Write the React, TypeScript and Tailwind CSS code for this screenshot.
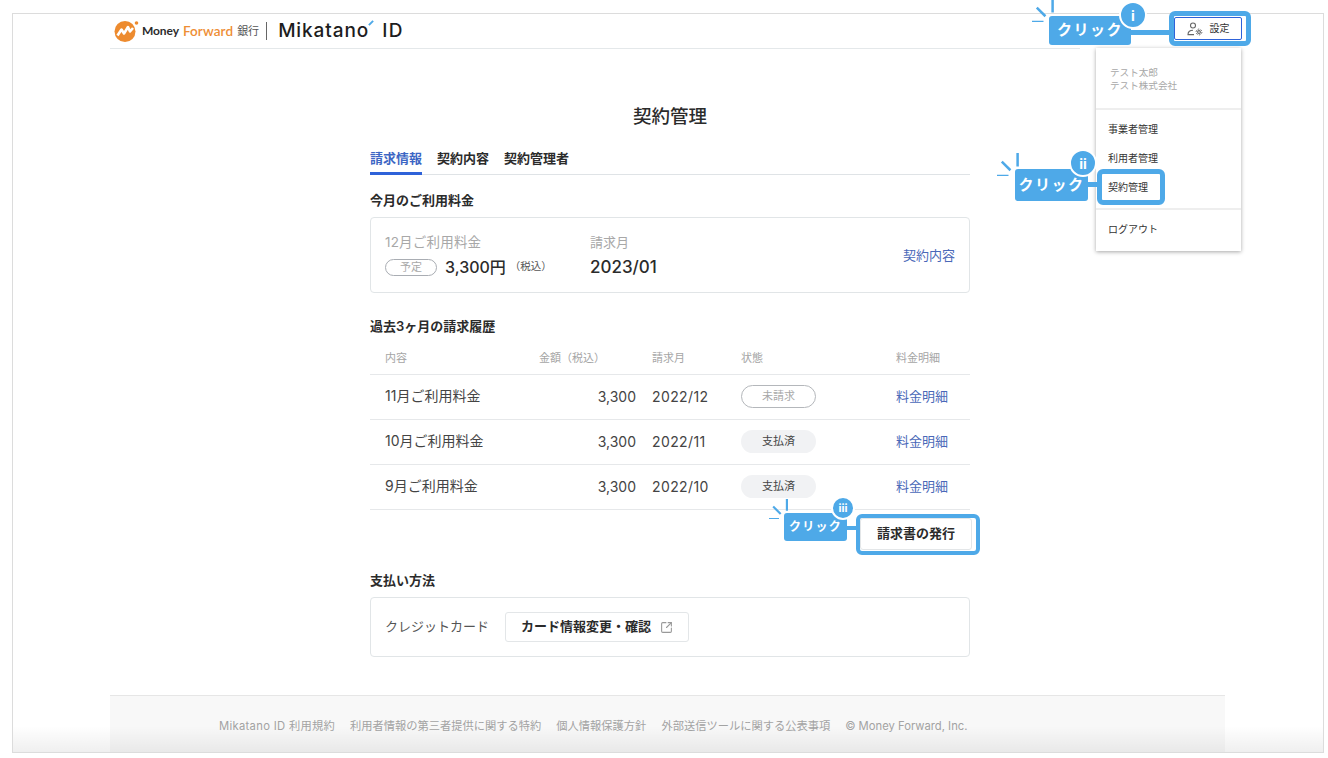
import { SquareArrowOutUpRight } from "lucide-react";

const jp = "font-['Inter','Noto_Sans_CJK_JP',sans-serif]";

const rows = [
  { label: "11月ご利用料金", amount: "3,300", month: "2022/12", status: "未請求", paid: false },
  { label: "10月ご利用料金", amount: "3,300", month: "2022/11", status: "支払済", paid: true },
  { label: "9月ご利用料金", amount: "3,300", month: "2022/10", status: "支払済", paid: true },
];

const footerLinks = [
  "Mikatano ID 利用規約",
  "利用者情報の第三者提供に関する特約",
  "個人情報保護方針",
  "外部送信ツールに関する公表事項",
  "© Money Forward, Inc.",
];

function Logo() {
  return (
    <div className="flex items-center">
      <svg width="25" height="22" viewBox="0 0 25 22" className="mr-[3px]">
        <circle cx="11" cy="11.5" r="10.5" fill="#ed8b2f" />
        <circle cx="22.5" cy="3" r="1.8" fill="#ed8b2f" />
        <path d="M3.5 15.5 L7.5 9.5 L10 13.5 L14 7 L16 11.5 L19 8" fill="none" stroke="#fff" strokeWidth="2.6" strokeLinejoin="round" />
      </svg>
      <span className="text-[12px] font-bold tracking-[-0.1px] text-[#2b2b2b] font-['Lato',sans-serif]">Money</span>
      <span className="ml-[4px] text-[13.5px] font-semibold tracking-[0.1px] text-[#ee8e35] font-['Lato',sans-serif]">Forward</span>
      <span className="ml-[4px] text-[11px] text-[#555]">銀行</span>
      <span className="ml-[7px] mr-[11px] h-[18px] w-px bg-[#666]" />
      <span className="relative text-[19px] font-medium tracking-[0.9px] text-[#1d1d1d] font-['Inter',sans-serif]">
        Mikatano
        <span className="absolute right-[-5px] top-[5px] h-[2px] w-[6px] -rotate-45 bg-[#4ea9e8]" />
      </span>
      <span className="ml-[13px] text-[19px] font-medium tracking-[1.5px] text-[#1d1d1d] font-['Inter',sans-serif]">ID</span>
    </div>
  );
}

function Sparks({ className, size }: { className: string; size: number }) {
  return (
    <svg width={size} height={size} viewBox="0 0 24 24" className={className}>
      <path d="M21.5 0V14 M5 9L14 18 M0 24H12" stroke="#4ea9e8" strokeWidth="2.6" fill="none" />
    </svg>
  );
}

function Badge({ className, label }: { className: string; label: string }) {
  return (
    <div className={`absolute flex items-center justify-center rounded-full border-2 border-white bg-[#4ea9e8] font-bold text-white font-['Inter',sans-serif] ${className}`}>
      {label}
    </div>
  );
}

export default function App() {
  return (
    <div className={`relative h-[758px] w-[1328px] overflow-hidden bg-white pl-[12px] pt-[13px] text-[#2b2b2b] ${jp}`}>
      <div className="relative flex h-[740px] w-[1312px] flex-col border border-[#dcdcdc] bg-white">
        {/* header */}
        <header className="ml-[97px] flex h-[35px] w-[970px] items-center border-b border-[#e4e8ea] pl-[4px]">
          <Logo />
        </header>

        {/* main column */}
        <main className="ml-[357px] w-[600px] flex-1">
          <h1 className="mt-[54px] text-center text-[18.5px] font-medium leading-[26px]">契約管理</h1>

          <div className="mt-[15px] flex h-[31px] gap-[15px] border-b border-[#dfe3e6] text-[13px] font-semibold leading-[28px]">
            <div className="h-[31px] border-b-[3px] border-[#2e62d9] text-[#3c66c4]">請求情報</div>
            <div>契約内容</div>
            <div>契約管理者</div>
          </div>

          <h2 className="mt-[16px] text-[13px] font-semibold leading-[18px]">今月のご利用料金</h2>
          <div className="mt-[8px] flex h-[76px] items-start rounded-[4px] border border-[#e1e5e7] pl-[14px]">
            <div className="w-[205px] pt-[15px]">
              <div className="text-[13.5px] tracking-[0.2px] leading-[18px] text-[#a8a8a8]">12月ご利用料金</div>
              <div className="mt-[5px] flex items-center">
                <span className="flex h-[17px] w-[52px] items-center justify-center rounded-full border-[1.5px] border-[#a9adb3] text-[11px] text-[#a8a8a8]">予定</span>
                <span className="ml-[8px] text-[16px] font-medium leading-[22px]">3,300円</span>
                <span className="ml-[4px] text-[10.5px] text-[#555]">（税込）</span>
              </div>
            </div>
            <div className="pt-[15px]">
              <div className="text-[13px] leading-[18px] text-[#a8a8a8]">請求月</div>
              <div className="mt-[5px] text-[17px] font-medium leading-[22px]">2023/01</div>
            </div>
            <div className="ml-auto pr-[14px] pt-[27px] text-[13px] leading-[20px] text-[#4a68b8]">契約内容</div>
          </div>

          <h2 className="mt-[24px] text-[13px] font-semibold leading-[18px]">過去3ヶ月の請求履歴</h2>
          <div className="mt-[8px]">
            <div className="grid h-[32px] grid-cols-[154px_113px_89px_155px_74px] items-center border-b border-[#e6e8ea] pl-[15px] text-[11px] text-[#a5a5a5]">
              <div>内容</div>
              <div>金額（税込）</div>
              <div>請求月</div>
              <div>状態</div>
              <div>料金明細</div>
            </div>
            {rows.map((r) => (
              <div key={r.month} className="grid h-[45px] grid-cols-[154px_113px_89px_155px_74px] items-center border-b border-[#e6e8ea] pl-[15px] text-[14px] text-[#444]">
                <div className="pb-[4px]">{r.label}</div>
                <div className="pb-[2px] pr-[16px] text-right">{r.amount}</div>
                <div className="pb-[2px] tracking-[0.4px]">{r.month}</div>
                <div className="pb-[2px]">
                  {r.paid ? (
                    <span className="flex h-[23px] w-[75px] items-center justify-center rounded-full bg-[#f1f2f4] text-[11px] text-[#444]">{r.status}</span>
                  ) : (
                    <span className="flex h-[23px] w-[75px] items-center justify-center rounded-full border-[1.5px] border-[#b4b7bb] text-[11px] text-[#a8a8a8]">{r.status}</span>
                  )}
                </div>
                <div className="text-[13px] text-[#4a68b8]">料金明細</div>
              </div>
            ))}
          </div>

          <div className="mt-[8px] flex justify-end">
            <button className="mr-[-2px] flex h-[32px] w-[112px] items-center justify-center rounded-[3px] border border-[#e3e6e8] text-[13px] font-semibold">請求書の発行</button>
          </div>

          <h2 className="mt-[21px] text-[13px] font-semibold leading-[18px]">支払い方法</h2>
          <div className="mt-[8px] flex h-[60px] items-center rounded-[4px] border border-[#e1e5e7] pl-[14px]">
            <span className="w-[120px] text-[13px] text-[#555]">クレジットカード</span>
            <button className="flex h-[30px] w-[184px] items-center justify-center gap-[9px] rounded-[3px] border border-[#e3e6e8] text-[13px] font-semibold">
              カード情報変更・確認
              <SquareArrowOutUpRight size={13} className="text-[#999]" />
            </button>
          </div>
        </main>

        {/* footer */}
        <footer className="ml-[97px] flex h-[57px] w-[1115px] items-center gap-[15px] border-t border-[#e6e6e6] bg-[#f8f8f8] pl-[109px] pt-[4px] text-[11.25px] text-[#a3a3a3]">
          {footerLinks.map((l, i) => (
            <span key={l} className={i === 0 ? "tracking-[0.3px]" : ""}>{l}</span>
          ))}
        </footer>

        {/* bottom fade of the screenshot */}
        <div className="absolute bottom-0 left-0 right-0 h-[26px] bg-gradient-to-b from-transparent to-[#00000010]" />
      </div>

      {/* account dropdown */}
      <div className="absolute left-[1096px] top-[48px] w-[145px] bg-white text-[10px] shadow-[0_1px_4px_rgba(0,0,0,0.35)]">
        <div className="h-[62px] border-b-2 border-[#eeeeee] pl-[14px] pt-[18px] text-[9.6px] leading-[13px] text-[#a8a8a8]">
          <div>テスト太郎</div>
          <div>テスト株式会社</div>
        </div>
        <div className="flex h-[100px] flex-col border-b-2 border-[#eeeeee] pl-[12px] pt-[5px] text-[#333]">
          <div className="h-[29px] leading-[29px]">事業者管理</div>
          <div className="h-[29px] leading-[29px]">利用者管理</div>
          <div className="h-[29px] leading-[29px]">契約管理</div>
        </div>
        <div className="h-[41px] pl-[12px] leading-[39px] text-[#333]">ログアウト</div>
      </div>

      {/* settings button */}
      <button className="absolute left-[1174px] top-[17px] flex h-[23px] w-[68px] items-center justify-center gap-[7px] rounded-[2px] border-[1.5px] border-[#2e62d9] bg-white text-[10px] text-[#333]">
        <svg width="16" height="14" viewBox="0 0 16 14" fill="none" stroke="#666" strokeWidth="1.1">
          <circle cx="6" cy="3.5" r="2.5" />
          <path d="M6 8.2C3 8.2 1 9.6 1 12.6h6" />
          <circle cx="12" cy="10" r="1.4" />
          <circle cx="12" cy="10" r="2.9" strokeWidth="1" strokeDasharray="1.6 1.4" />
        </svg>
        設定
      </button>

      {/* callout i */}
      <Sparks className="absolute left-[1032px] top-[-1px]" size={23} />
      <div className="absolute left-[1049px] top-[16px] flex h-[29px] w-[82px] items-center justify-center rounded-[3px] bg-[#4ea9e8] text-[15px] font-bold tracking-[1.5px] text-white">クリック</div>
      <div className="absolute left-[1131px] top-[30px] h-[5px] w-[40px] bg-[#4ea9e8]" />
      <div className="absolute left-[1169px] top-[11px] h-[35px] w-[82px] rounded-[6px] border-[5px] border-[#4ea9e8]" />
      <Badge className="left-[1119px] top-[1px] h-[28px] w-[28px] text-[14px]" label="i" />

      {/* callout ii */}
      <Sparks className="absolute left-[997px] top-[153px]" size={23} />
      <div className="absolute left-[1015px] top-[169px] flex h-[32px] w-[73px] items-center justify-center rounded-[3px] bg-[#4ea9e8] text-[15px] font-bold tracking-[1.5px] text-white">クリック</div>
      <div className="absolute left-[1088px] top-[182px] h-[5px] w-[10px] bg-[#4ea9e8]" />
      <div className="absolute left-[1097px] top-[169px] h-[36px] w-[68px] rounded-[6px] border-[5px] border-[#4ea9e8]" />
      <Badge className="left-[1069px] top-[149px] h-[28px] w-[28px] text-[14px]" label="ii" />

      {/* callout iii */}
      <Sparks className="absolute left-[769px] top-[499px]" size={20} />
      <div className="absolute left-[784px] top-[513px] flex h-[28px] w-[63px] items-center justify-center rounded-[3px] bg-[#4ea9e8] text-[12px] font-bold tracking-[1.2px] text-white">クリック</div>
      <div className="absolute left-[847px] top-[526px] h-[4px] w-[10px] bg-[#4ea9e8]" />
      <div className="absolute left-[856px] top-[514px] h-[41px] w-[124px] rounded-[6px] border-[4px] border-[#4ea9e8]" />
      <Badge className="left-[831px] top-[496px] h-[24px] w-[24px] text-[11px]" label="iii" />
    </div>
  );
}
